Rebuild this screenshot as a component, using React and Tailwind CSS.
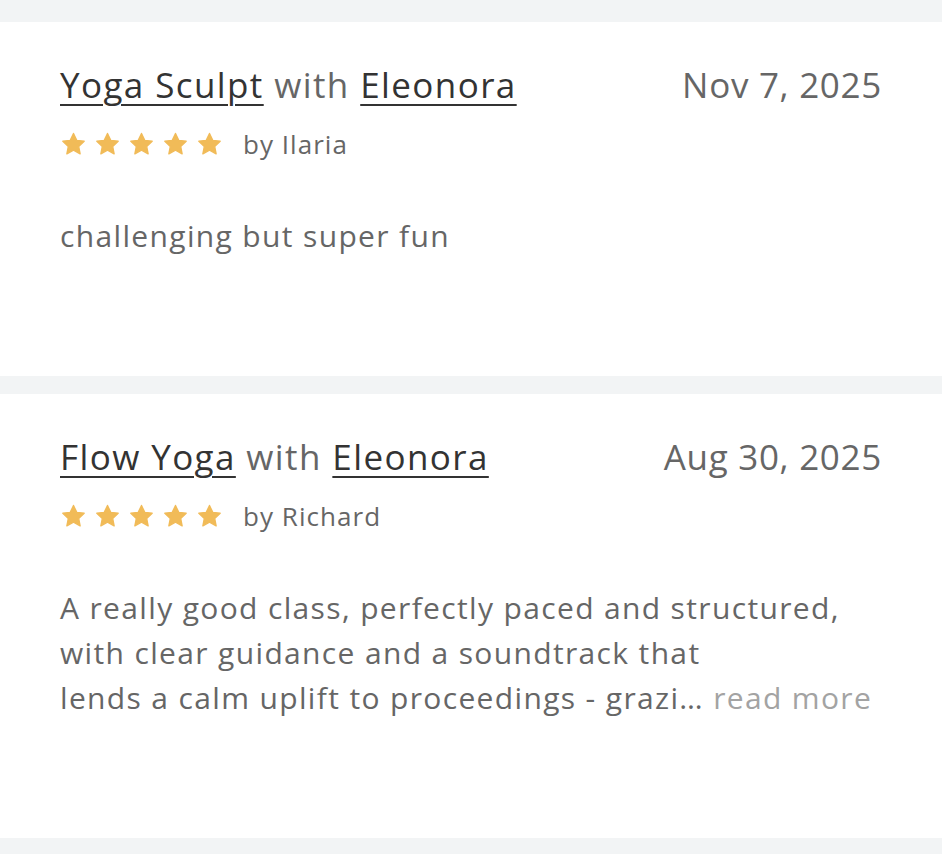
import React from 'react';

const reviews = [
    {
        id: 1,
        className: 'Yoga Sculpt',
        teacher: 'Eleonora',
        date: 'Nov 7, 2025',
        author: 'Ilaria',
        lines: ['challenging but super fun'],
        truncated: false,
    },
    {
        id: 2,
        className: 'Flow Yoga',
        teacher: 'Eleonora',
        date: 'Aug 30, 2025',
        author: 'Richard',
        lines: [
            'A really good class, perfectly paced and structured,',
            'with clear guidance and a soundtrack that',
            'lends a calm uplift to proceedings - grazi…',
        ],
        truncated: true,
    },
];

const Star = () => (
    <svg viewBox="0 0 24 24" className="w-[27px] h-[27px]" aria-hidden="true">
        <path
            d="M12 2.2l2.9 6.1 6.6.8-4.9 4.6 1.3 6.6L12 17.1l-5.9 3.2 1.3-6.6-4.9-4.6 6.6-.8z"
            fill="#f1bb58"
            stroke="#f1bb58"
            strokeWidth="1.2"
            strokeLinejoin="round"
        />
    </svg>
);

const ReviewCard = ({ review }) => (
    <div className="bg-white px-[60px] pt-[41px] pb-[118px]">
        <div className="flex items-center justify-between text-[35px] leading-[44px] tracking-[0.04em]">
            <div className="text-[#666]">
                <a href="#" className="text-[#333] underline decoration-[2px] underline-offset-[6px]">{review.className}</a>
                {' '}with{' '}
                <a href="#" className="text-[#333] underline decoration-[2px] underline-offset-[6px]">{review.teacher}</a>
            </div>
            <div className="text-[#666] tracking-[0.02em]">{review.date}</div>
        </div>

        <div className="flex items-center mt-[24px] h-[26px]">
            <div className="flex gap-[7px]">
                {[0, 1, 2, 3, 4].map((i) => (
                    <Star key={i} />
                ))}
            </div>
            <span className="ml-[20px] text-[26px] tracking-[0.04em] text-[#666]">by {review.author}</span>
        </div>

        <p className="mt-[56px] text-[30px] leading-[45px] tracking-[0.045em] text-[#666]">
            {review.lines.map((line, i) => (
                <React.Fragment key={i}>
                    {line}
                    {i < review.lines.length - 1 && <br />}
                </React.Fragment>
            ))}
            {review.truncated && <span className="text-[#a3a3a3]"> read more</span>}
        </p>
    </div>
);

const App = () => {
    return (
        <div className="min-h-screen bg-[#f2f4f5] pt-[22px] flex flex-col gap-[18px] font-['Open_Sans',sans-serif]">
            {reviews.map((r) => (
                <ReviewCard key={r.id} review={r} />
            ))}
        </div>
    );
};

export default App;
